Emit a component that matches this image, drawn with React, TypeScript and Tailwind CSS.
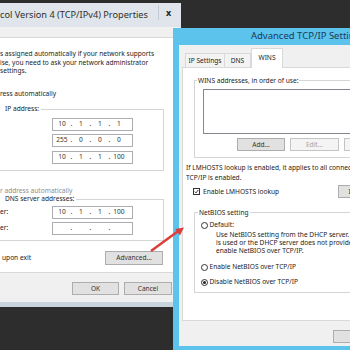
import { Fragment } from 'react';

const IpField = ({ parts }: { parts: string[] }) => (
  <div className="flex h-[13px] w-[81px] items-center border border-[#abadb3] bg-white pl-[1px] text-[#333]">
    {parts.map((p, i) => (
      <Fragment key={i}>
        {i > 0 && <span className="w-[3px] text-center">.</span>}
        <span className="w-[16px] text-center">{p}</span>
      </Fragment>
    ))}
  </div>
);

const Radio = ({ checked }: { checked?: boolean }) => (
  <span className="flex h-[7px] w-[7px] shrink-0 items-center justify-center rounded-full border border-[#333] bg-white">
    {checked && <span className="h-[3px] w-[3px] rounded-full bg-[#222]" />}
  </span>
);

const Btn = ({ label, w, disabled }: { label: string; w: string; disabled?: boolean }) => (
  <div
    className={`flex h-[13px] items-center justify-center border ${w} ${
      disabled ? 'border-[#c4c4c4] bg-[#f4f4f4] text-[#a3a3a3]' : 'border-[#adadad] bg-[#e1e1e1] text-[#333]'
    }`}
  >
    {label}
  </div>
);

export default function App() {
  return (
    <div className="relative h-[350px] w-[350px] overflow-hidden bg-[#2d2d2d] font-['Noto_Sans',sans-serif] text-[6.6px] text-[#222]">
      {/* IPv4 properties window (behind) */}
      <div className="absolute left-0 top-[3px] flex h-[304px] w-[181px] flex-col bg-[#f0f0f0]">
        <div className="flex h-[24px] shrink-0 items-center justify-between bg-[#dfe5ea] pr-[3px]">
          <span className="text-[9.2px] text-[#2f2f2f]">col Version 4 (TCP/IPv4) Properties</span>
          <div className="mb-[5px] flex h-[15px] w-[20px] items-center justify-center border-l border-[#c3ccd4] text-[9px] font-bold text-[#222]">
            x
          </div>
        </div>
        <div className="h-[10px] shrink-0" />

        <div className="h-[236px] shrink-0 border-y border-[#d9d9d9] bg-white pt-[12px] leading-[8.5px]">
          <p>s assigned automatically if your network supports</p>
          <p>ise, you need to ask your network administrator</p>
          <p>settings.</p>
          <p className="mt-[14px]">ress automatically</p>

          <fieldset className="mt-[7px] w-[164px] border-y border-r border-[#d5d5d5] pb-[6px]">
            <legend className="pl-[5px] pr-[2px]">IP address:</legend>
            <div className="mt-[4px] flex flex-col gap-[3.5px] pl-[52px]">
              <IpField parts={['10', '1', '1', '1']} />
              <IpField parts={['255', '0', '0', '0']} />
              <IpField parts={['10', '1', '1', '100']} />
            </div>
          </fieldset>

          <p className="mt-[16px] text-[#8d8d8d]">r address automatically</p>

          <fieldset className="w-[164px] border-y border-r border-[#d5d5d5] pb-[5px]">
            <legend className="pl-[5px] pr-[2px]">DNS server addresses:</legend>
            <div className="mt-[2px] flex flex-col gap-[3.5px]">
              <div className="flex items-center">
                <span className="w-[52px]">er:</span>
                <IpField parts={['10', '1', '1', '100']} />
              </div>
              <div className="flex items-center">
                <span className="w-[52px]">er:</span>
                <IpField parts={['', '', '', '']} />
              </div>
            </div>
          </fieldset>

          <div className="mt-[10px] flex w-[163px] items-center justify-between">
            <span className="pl-[2px]">upon exit</span>
            <div className="flex h-[14px] w-[58px] items-center justify-center border border-[#adadad] bg-[#e1e1e1] text-[#333]">
              Advanced...
            </div>
          </div>
        </div>

        <div className="flex h-[29px] shrink-0 gap-[5px] pl-[72px] pt-[9px]">
          <Btn label="OK" w="w-[47px]" />
          <Btn label="Cancel" w="w-[48px]" />
        </div>
        <div className="h-[5px] shrink-0 bg-[#c8d5dc]" />
      </div>

      {/* Advanced TCP/IP settings window (front) */}
      <div className="absolute left-[173px] top-[28px] flex h-[322px] w-[270px] flex-col bg-[#5bc3ec] px-[6px]">
        <div className="flex h-[17px] shrink-0 items-center justify-center text-[9.5px] text-[#1d3b5a]">
          Advanced TCP/IP Settings
        </div>
        <div className="flex h-[301px] shrink-0 flex-col bg-[#f0f0f0] px-[3px] pt-[3px]">
          <div className="flex h-[19px] shrink-0 items-end pl-[3px]">
            <div className="flex h-[14px] w-[40px] items-center justify-center border border-b-0 border-[#d9d9d9] bg-[#f3f3f3]">
              IP Settings
            </div>
            <div className="flex h-[14px] w-[26px] items-center justify-center border border-b-0 border-l-0 border-[#d9d9d9] bg-[#f3f3f3]">
              DNS
            </div>
            <div className="relative -mb-px flex h-[20px] w-[32px] items-start justify-center border border-b-0 border-[#d9d9d9] bg-white pt-[4px]">
              WINS
            </div>
          </div>

          <div className="h-[254px] shrink-0 border border-[#d9d9d9] bg-white">
            <fieldset className="ml-[11px] mt-[7.5px] border-y border-l border-[#d5d5d5] pb-[6px]">
              <legend className="ml-[2px] px-[1px] leading-[9px]">WINS addresses, in order of use:</legend>
              <div className="ml-[8px] mt-[4.5px] h-[45px] border border-[#828790] bg-white" />
              <div className="ml-[42px] mt-[4px] flex gap-[5px]">
                <Btn label="Add..." w="w-[48px]" />
                <Btn label="Edit..." w="w-[49px]" disabled />
                <Btn label="Remove" w="w-[48px]" disabled />
              </div>
            </fieldset>

            <div className="ml-[3px] mt-[5px] whitespace-nowrap leading-[10px]">
              <p>If LMHOSTS lookup is enabled, it applies to all connections for which</p>
              <p>TCP/IP is enabled.</p>
            </div>

            <div className="ml-[10px] mt-[2px] flex h-[13px] items-center">
              <div className="flex w-[145px] items-center gap-[3px]">
                <span className="flex h-[7px] w-[7px] items-center justify-center border border-[#333] bg-white">
                  <svg viewBox="0 0 8 8" className="h-[7px] w-[7px]">
                    <path d="M1.2 4.2 L3.2 6.2 L6.8 1.6" fill="none" stroke="#222" strokeWidth="1.4" />
                  </svg>
                </span>
                <span>Enable LMHOSTS lookup</span>
              </div>
              <Btn label="Import LMHOSTS..." w="w-[80px]" />
            </div>

            <fieldset className="ml-[11px] mt-[9.5px] border-y border-l border-[#d5d5d5] pb-[5.5px]">
              <legend className="ml-[3px] px-[1px] leading-[9px]">NetBIOS setting</legend>
              <div className="ml-[6px] mt-[4px] flex h-[9px] items-center gap-[1.5px]">
                <Radio />
                <span>Default:</span>
              </div>
              <div className="ml-[21px] mt-[1.5px] whitespace-nowrap leading-[8px]">
                <p>Use NetBIOS setting from the DHCP server. If static IP address</p>
                <p>is used or the DHCP server does not provide NetBIOS setting,</p>
                <p>enable NetBIOS over TCP/IP.</p>
              </div>
              <div className="ml-[6px] mt-[7.5px] flex h-[9px] items-center gap-[1.5px]">
                <Radio />
                <span>Enable NetBIOS over TCP/IP</span>
              </div>
              <div className="ml-[6px] mt-[6px] flex h-[9px] items-center gap-[1.5px]">
                <Radio checked />
                <span>Disable NetBIOS over TCP/IP</span>
              </div>
            </fieldset>
          </div>

          <div className="ml-[151px] mt-[9px]">
            <Btn label="OK" w="w-[47px]" />
          </div>
        </div>
        <div className="h-[4px] shrink-0" />
      </div>

      {/* red annotation arrow */}
      <svg className="pointer-events-none absolute left-0 top-0 h-[350px] w-[350px]" viewBox="0 0 350 350">
        <line x1="151" y1="251" x2="179" y2="230.5" stroke="#d9403a" strokeWidth="2.5" />
        <polygon points="184,227.5 179.9,235.5 175.2,229" fill="#d9403a" />
      </svg>
    </div>
  );
}
